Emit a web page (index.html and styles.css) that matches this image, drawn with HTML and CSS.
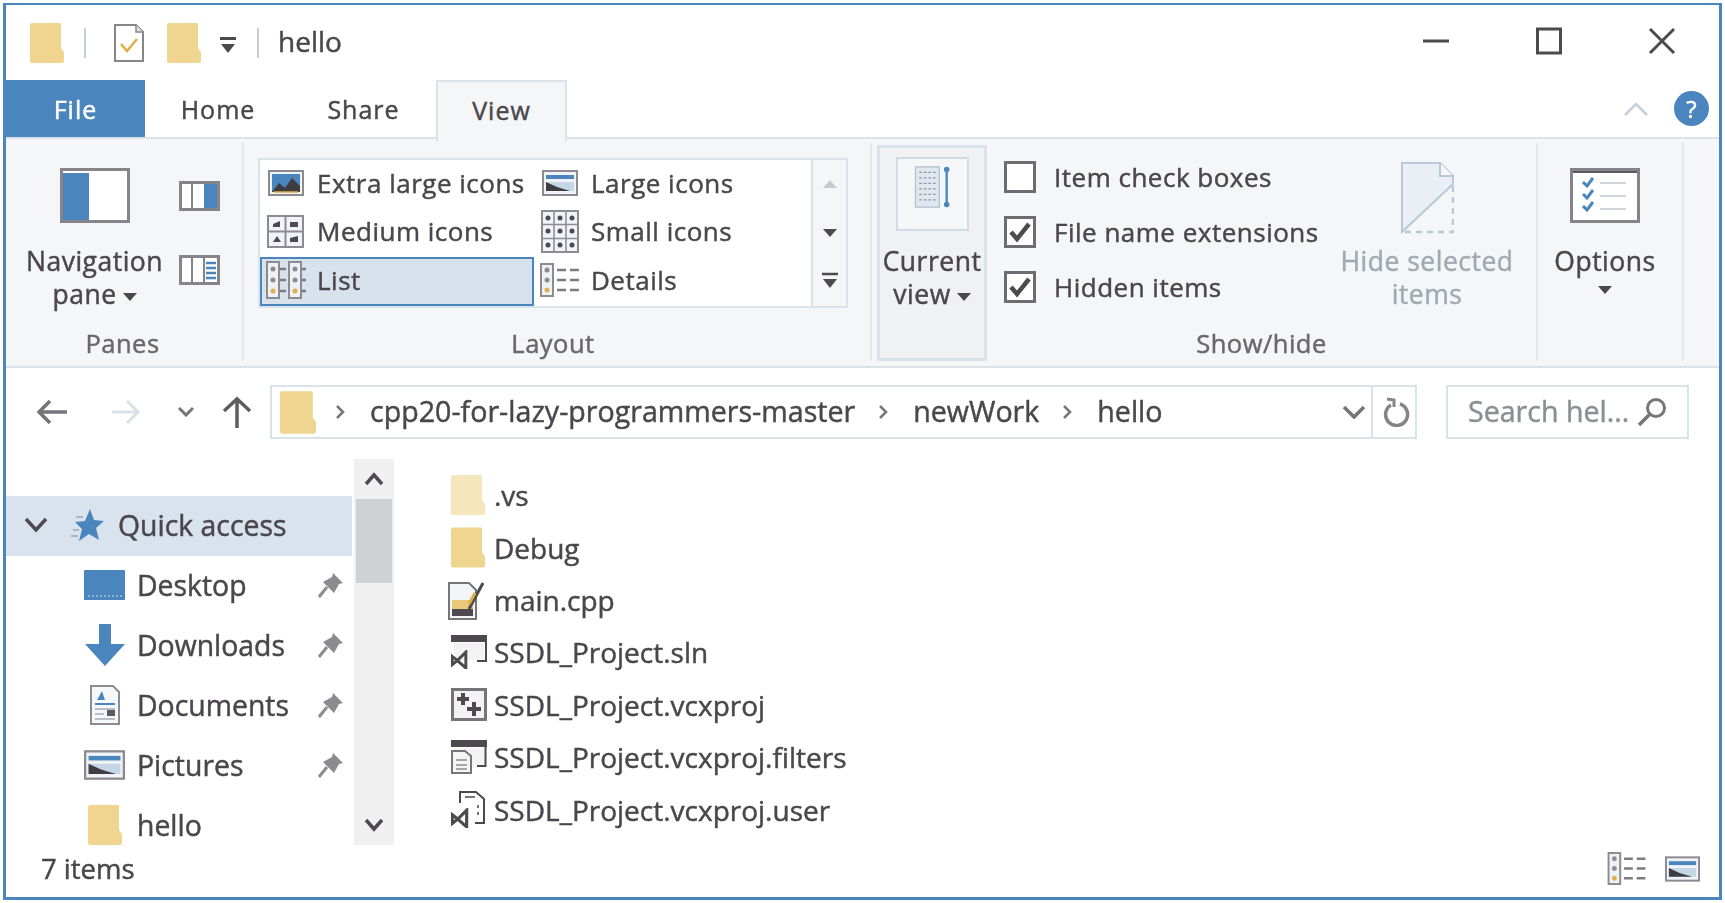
FILE: index.html
```html
<!DOCTYPE html>
<html>
<head>
    <title>hello</title>
    <link rel="stylesheet" href="styles.css">
</head>

<body>
    <!-- shared icons -->
    <svg class="sprite">
        <symbol id="folder" viewBox="0 0 34 40"><path d="M2 0H30Q31 0 31 2V25L34 29V38Q34 40 32 40H2Q0 40 0 38V2Q0 0 2 0Z" fill="#efd58f"/></symbol>
        <symbol id="pin" viewBox="0 0 26 26"><path d="M1 25L9 15" stroke="#8d8a90" stroke-width="3"/><path d="M15 1L25 11L21 12L16 21L5 10L14 5Z" fill="#8d8a90"/></symbol>
        <symbol id="picture" viewBox="0 0 36 26"><rect x="1" y="1" width="34" height="24" fill="#f0f4f8" stroke="#8c8a90" stroke-width="2"/><rect x="4" y="5" width="28" height="4" fill="#4a86bd"/><path d="M4 12H32V21H4Z" fill="#c5d6e6"/><path d="M4 12L15 17L28 21H4Z" fill="#3f3c42"/></symbol>
        <symbol id="picture-xl" viewBox="0 0 36 26"><rect x="1" y="1" width="34" height="24" fill="#f0f4f8" stroke="#8c8a90" stroke-width="2"/><rect x="4" y="4" width="28" height="18" fill="#4a86bd"/><path d="M4 22L11 13L17 18L24 8L32 16V22Z" fill="#3f3c42"/><path d="M6 22H30" stroke="#dcaf45" stroke-width="1.5"/></symbol>
        <symbol id="details" viewBox="0 0 40 34"><rect x="1" y="1" width="12" height="32" fill="#eef2f6" stroke="#8d8a90" stroke-width="2"/><circle cx="7" cy="7" r="2.5" fill="#8d8a90"/><circle cx="7" cy="17" r="2.5" fill="#8d8a90"/><circle cx="7" cy="27" r="2.5" fill="#d9b04d"/><path d="M17 7H26M30 7H39M17 17H26M30 17H39M17 27H26M30 27H39" stroke="#7d7a80" stroke-width="2.5"/></symbol>
        <symbol id="vs" viewBox="0 0 16 18"><path d="M1 6L6 10L1 14ZM6 10L14 2V17Z" fill="none" stroke="#4d494f" stroke-width="2.8"/></symbol>
    </svg>

    <div class="window">
        <div class="titlebar">
            <svg class="qa-folder" width="34" height="40"><use href="#folder"/></svg>
            <span class="qa-sep"></span>
            <svg class="qa-doc" width="30" height="38" viewBox="0 0 30 38"><path d="M1 1H22L29 8V37H1Z" fill="#fff" stroke="#86858b" stroke-width="2"/><path d="M22 1V8H29" fill="#e2e8ee" stroke="#86858b" stroke-width="1.5"/><path d="M7 20L13 27L23 15" fill="none" stroke="#dcaf45" stroke-width="2.5"/></svg>
            <svg class="qa-folder2" width="34" height="40"><use href="#folder"/></svg>
            <svg class="qa-caret" width="18" height="17" viewBox="0 0 18 17"><path d="M1 1.5H17" stroke="#4d494f" stroke-width="3"/><path d="M2 7H16L9 16Z" fill="#4d494f"/></svg>
            <span class="qa-sep qa-sep-last"></span>
            <span class="title-text">hello</span>
            <div class="win-buttons">
                <svg width="28" height="28" viewBox="0 0 28 28"><path d="M1 14H27" stroke="#4d494f" stroke-width="3"/></svg>
                <svg width="28" height="28" viewBox="0 0 28 28"><rect x="2.5" y="2" width="23" height="24" fill="none" stroke="#4d494f" stroke-width="3"/></svg>
                <svg width="28" height="28" viewBox="0 0 28 28"><path d="M2 2L26 26M26 2L2 26" stroke="#4d494f" stroke-width="3"/></svg>
            </div>
        </div>

        <div class="tabs">
            <div class="tab tab-file">File</div>
            <div class="tab tab-home">Home</div>
            <div class="tab tab-share">Share</div>
            <div class="tab tab-view">View</div>
            <div class="tabs-right">
                <svg width="24" height="14" viewBox="0 0 24 14"><path d="M1 13L12 2L23 13" fill="none" stroke="#c3d0dd" stroke-width="2.5"/></svg>
                <div class="help">?</div>
            </div>
        </div>

        <div class="ribbon">
            <div class="group group-panes">
                <div class="group-body panes-body">
                    <div class="big-btn">
                        <div class="big-icon">
                            <svg width="70" height="55" viewBox="0 0 70 55"><rect x="1.5" y="1.5" width="67" height="52" fill="#fff" stroke="#86838a" stroke-width="3"/><rect x="3" y="5" width="26" height="47" fill="#4a86bd"/></svg>
                        </div>
                        <div class="big-label">Navigation<br>pane<i class="caret"></i></div>
                    </div>
                    <div class="small-panes">
                        <svg width="41" height="30" viewBox="0 0 41 30"><rect x="1.5" y="1.5" width="38" height="27" fill="#fff" stroke="#86838a" stroke-width="3"/><path d="M13 3V27" stroke="#86838a" stroke-width="2"/><rect x="25" y="3" width="13" height="24" fill="#4a86bd"/></svg>
                        <svg width="41" height="30" viewBox="0 0 41 30"><rect x="1.5" y="1.5" width="38" height="27" fill="#fff" stroke="#86838a" stroke-width="3"/><path d="M13 3V27M25 3V27" stroke="#86838a" stroke-width="2"/><path d="M27 8H37M27 13H37M27 18H37M27 23H37" stroke="#4a86bd" stroke-width="2.5"/></svg>
                    </div>
                </div>
                <div class="group-label label-panes">Panes</div>
            </div>

            <div class="group group-layout">
                <div class="group-body">
                    <div class="gallery">
                        <div class="gallery-grid">
                            <div class="tile"><span class="tile-icon"><svg width="36" height="26"><use href="#picture-xl"/></svg></span>Extra large icons</div>
                            <div class="tile"><span class="tile-icon"><svg width="36" height="26"><use href="#picture"/></svg></span>Large icons</div>
                            <div class="tile">
                                <span class="tile-icon">
                                    <svg width="37" height="33" viewBox="0 0 37 33"><rect x="1" y="1" width="35" height="31" fill="#f0f4f8" stroke="#8d8a90" stroke-width="2"/><path d="M18.5 1V32M1 16.5H36" stroke="#8d8a90" stroke-width="2"/><path d="M6 9l7-3v6H6ZM23 7h8v5h-8ZM6 27l4-6 4 6ZM23 27v-4l8-2v6Z" fill="#4d494f"/></svg>
                                </span>Medium icons
                            </div>
                            <div class="tile">
                                <span class="tile-icon">
                                    <svg width="38" height="43" viewBox="0 0 38 43"><rect x="1" y="1" width="36" height="41" fill="#f0f4f8" stroke="#8d8a90" stroke-width="2"/><path d="M13 1V42M25 1V42M1 14.5H37M1 28.5H37" stroke="#8d8a90" stroke-width="1.5"/><g fill="#4d494f"><circle cx="7" cy="8" r="2.5"/><circle cx="19" cy="8" r="2.5"/><circle cx="31" cy="8" r="2.5"/><circle cx="7" cy="21" r="2.5"/><circle cx="19" cy="21" r="2.5"/><circle cx="31" cy="21" r="2.5"/><circle cx="7" cy="35" r="2.5"/><circle cx="19" cy="35" r="2.5"/><circle cx="31" cy="35" r="2.5"/></g></svg>
                                </span>Small icons
                            </div>
                            <div class="tile tile-active">
                                <span class="tile-icon">
                                    <svg width="40" height="38" viewBox="0 0 40 38"><g fill="#eef2f6" stroke="#8d8a90" stroke-width="2"><rect x="1" y="1" width="12" height="36"/><rect x="23" y="1" width="12" height="36"/></g><g fill="#8d8a90"><circle cx="7" cy="8" r="2.5"/><circle cx="7" cy="19" r="2.5"/><circle cx="29" cy="8" r="2.5"/><circle cx="29" cy="19" r="2.5"/></g><circle cx="7" cy="30" r="2.5" fill="#d9b04d"/><circle cx="29" cy="30" r="2.5" fill="#d9b04d"/><path d="M14 8H20M14 19H20M14 30H20M36 8H40M36 19H40M36 30H40" stroke="#7d7a80" stroke-width="2.5"/></svg>
                                </span>List
                            </div>
                            <div class="tile"><span class="tile-icon"><svg width="40" height="34"><use href="#details"/></svg></span>Details</div>
                        </div>
                        <div class="gallery-scroll">
                            <svg width="16" height="10" viewBox="0 0 16 10"><path d="M1 9L8 1L15 9Z" fill="#c2cbd4"/></svg>
                            <svg class="scroll-down" width="16" height="10" viewBox="0 0 16 10"><path d="M1 1L8 9L15 1Z" fill="#4d494f"/></svg>
                            <svg class="scroll-more" width="18" height="18" viewBox="0 0 18 18"><path d="M1 2H17" stroke="#4d494f" stroke-width="2.5"/><path d="M2 7H16L9 16Z" fill="#4d494f"/></svg>
                        </div>
                    </div>
                </div>
                <div class="group-label label-layout">Layout</div>
            </div>

            <div class="current-view">
                <div class="cv-box">
                    <svg width="40" height="44" viewBox="0 0 40 48"><rect x="2" y="2" width="26" height="44" fill="#dfe7ef" stroke="#b8c4d0" stroke-width="1.5"/><path d="M6 8H24M6 14H24M6 20H24M6 26H24M6 32H24M6 38H24" stroke="#8f9aa5" stroke-width="1.5" stroke-dasharray="3 2"/><path d="M36 4V44" stroke="#4a86bd" stroke-width="2.5"/><circle cx="36" cy="5" r="3" fill="#4a86bd"/><circle cx="36" cy="43" r="3" fill="#4a86bd"/></svg>
                </div>
                <div class="big-label cv-label">Current<br>view<i class="caret"></i></div>
            </div>

            <div class="group group-show">
                <div class="group-body show-body">
                    <div class="checks">
                        <label class="check-row"><span class="box"></span>Item check boxes</label>
                        <label class="check-row"><span class="box"><svg width="24" height="22" viewBox="0 0 24 22"><path d="M3 11L9 18L21 3" fill="none" stroke="#4d494f" stroke-width="4.5"/></svg></span>File name extensions</label>
                        <label class="check-row"><span class="box"><svg width="24" height="22" viewBox="0 0 24 22"><path d="M3 11L9 18L21 3" fill="none" stroke="#4d494f" stroke-width="4.5"/></svg></span>Hidden items</label>
                    </div>
                    <div class="big-btn hide-btn">
                        <div class="big-icon">
                            <svg width="54" height="72" viewBox="0 0 54 72"><path d="M2 1H40L53 14V22L2 70Z" fill="#e9eff5" stroke="#b9c8d8" stroke-width="2"/><path d="M40 1V14H53" fill="#f5f7f9" stroke="#b9c8d8" stroke-width="2"/><path d="M53 24V70H4" fill="none" stroke="#b9c8d8" stroke-width="2.5" stroke-dasharray="6 5"/></svg>
                        </div>
                        <div class="big-label muted">Hide selected<br>items</div>
                    </div>
                </div>
                <div class="group-label">Show/hide</div>
            </div>

            <div class="group group-options">
                <div class="big-btn">
                    <div class="big-icon">
                        <svg width="70" height="55" viewBox="0 0 70 55"><rect x="1.5" y="1.5" width="67" height="52" fill="#fff" stroke="#86838a" stroke-width="3"/><path d="M3 4H67" stroke="#5d595f" stroke-width="2"/><path d="M13 14L17 18L23 10M13 26L17 30L23 22M13 38L17 42L23 34" fill="none" stroke="#4a86bd" stroke-width="3"/><path d="M30 15H56M30 28H56M30 41H56" stroke="#cfd5db" stroke-width="2"/></svg>
                    </div>
                    <div class="big-label">Options<br><i class="caret caret-solo"></i></div>
                </div>
            </div>
        </div>

        <div class="addressbar">
            <svg class="nav-back" width="32" height="26" viewBox="0 0 32 26"><path d="M31 13H3M14 2L3 13L14 24" fill="none" stroke="#77747a" stroke-width="3.5"/></svg>
            <svg class="nav-forward" width="30" height="26" viewBox="0 0 30 26"><path d="M1 13H27M16 2L27 13L16 24" fill="none" stroke="#d9e1e8" stroke-width="3"/></svg>
            <svg class="nav-down" width="16" height="10" viewBox="0 0 16 10"><path d="M1 1L8 8L15 1" fill="none" stroke="#77747a" stroke-width="3"/></svg>
            <svg class="nav-up" width="30" height="32" viewBox="0 0 30 32"><path d="M15 32V3M2 15L15 3L28 15" fill="none" stroke="#5f5c62" stroke-width="3.5"/></svg>
            <div class="address">
                <svg class="addr-folder" width="36" height="43"><use href="#folder"/></svg>
                <svg class="crumb-sep crumb-first" width="9" height="14" viewBox="0 0 9 14"><path d="M1 1L7 7L1 13" fill="none" stroke="#77747a" stroke-width="2.5"/></svg>
                <span>cpp20-for-lazy-programmers-master</span>
                <svg class="crumb-sep" width="9" height="14" viewBox="0 0 9 14"><path d="M1 1L7 7L1 13" fill="none" stroke="#77747a" stroke-width="2.5"/></svg>
                <span>newWork</span>
                <svg class="crumb-sep" width="9" height="14" viewBox="0 0 9 14"><path d="M1 1L7 7L1 13" fill="none" stroke="#77747a" stroke-width="2.5"/></svg>
                <span>hello</span>
                <svg class="addr-drop" width="24" height="14" viewBox="0 0 24 14"><path d="M2 2L12 12L22 2" fill="none" stroke="#77747a" stroke-width="3.5"/></svg>
                <div class="addr-refresh">
                    <svg width="28" height="30" viewBox="0 0 28 30"><path d="M9 8A11 11 0 1 0 18 7" fill="none" stroke="#86838a" stroke-width="3.5"/><path d="M5 2L12 3V10" fill="none" stroke="#86838a" stroke-width="3"/></svg>
                </div>
            </div>
            <div class="search">
                <span>Search hel...</span>
                <svg width="30" height="30" viewBox="0 0 30 30"><circle cx="19" cy="11" r="8.5" fill="none" stroke="#77747a" stroke-width="3"/><path d="M13 17L2 28" stroke="#77747a" stroke-width="3.5"/></svg>
            </div>
        </div>

        <div class="main">
            <div class="sidebar">
                <div class="nav-row nav-active">
                    <svg class="nav-chevron" width="24" height="16" viewBox="0 0 24 16"><path d="M2 2L12 13L22 2" fill="none" stroke="#4d494f" stroke-width="3.5"/></svg>
                    <svg class="nav-star" width="34" height="34" viewBox="0 0 34 34"><path d="M20 1L24 12L34 13L26 20L29 32L19 26L9 33L12 21L5 14L15 13Z" fill="#4a86bd"/><path d="M1 28H8M3 22H9M6 9H13" stroke="#9aa7b5" stroke-width="1.5"/></svg>
                    <span>Quick access</span>
                </div>
                <div class="nav-row nav-child">
                    <span class="nav-icon"><svg width="41" height="30" viewBox="0 0 41 30"><rect width="41" height="30" rx="1" fill="#4a86bd"/><path d="M4 26H38" stroke="#9fc1de" stroke-width="1.5" stroke-dasharray="2 2"/></svg></span>
                    <span class="nav-text">Desktop</span>
                    <svg width="26" height="26"><use href="#pin"/></svg>
                </div>
                <div class="nav-row nav-child">
                    <span class="nav-icon"><svg width="40" height="42" viewBox="0 0 40 42"><path d="M14 0H26V20H40L20 42L0 20H14Z" fill="#4a86bd"/></svg></span>
                    <span class="nav-text">Downloads</span>
                    <svg width="26" height="26"><use href="#pin"/></svg>
                </div>
                <div class="nav-row nav-child">
                    <span class="nav-icon"><svg width="30" height="40" viewBox="0 0 30 40"><path d="M1 1H23L29 7V39H1Z" fill="#f5f8fb" stroke="#8d8a90" stroke-width="2"/><path d="M12 6L7 15H15Z" fill="#4a86bd"/><path d="M5 19H25" stroke="#4a86bd" stroke-width="2"/><path d="M5 24H25M5 34H25M5 29H14" stroke="#a7aab0" stroke-width="1.5"/><rect x="17" y="25" width="8" height="6" fill="#5d595f"/></svg></span>
                    <span class="nav-text">Documents</span>
                    <svg width="26" height="26"><use href="#pin"/></svg>
                </div>
                <div class="nav-row nav-child">
                    <span class="nav-icon"><svg width="41" height="30"><use href="#picture"/></svg></span>
                    <span class="nav-text">Pictures</span>
                    <svg width="26" height="26"><use href="#pin"/></svg>
                </div>
                <div class="nav-row nav-child">
                    <span class="nav-icon"><svg width="34" height="40"><use href="#folder"/></svg></span>
                    <span class="nav-text">hello</span>
                </div>
            </div>

            <div class="scrollbar">
                <div class="scroll-btn"><svg width="20" height="14" viewBox="0 0 20 14"><path d="M2 12L10 3L18 12" fill="none" stroke="#4d494f" stroke-width="3.5"/></svg></div>
                <div class="scroll-thumb"></div>
                <div class="scroll-track"></div>
                <div class="scroll-btn"><svg width="20" height="14" viewBox="0 0 20 14"><path d="M2 2L10 11L18 2" fill="none" stroke="#4d494f" stroke-width="3.5"/></svg></div>
            </div>

            <div class="files">
                <div class="file">
                    <span class="file-icon"><svg class="hidden-folder" width="34" height="40"><use href="#folder"/></svg></span>.vs
                </div>
                <div class="file">
                    <span class="file-icon"><svg width="34" height="41"><use href="#folder"/></svg></span>Debug
                </div>
                <div class="file">
                    <span class="file-icon"><svg class="cpp-icon" width="38" height="40" viewBox="0 0 38 40"><path d="M1 3H21L28 10V39H1Z" fill="#f3f6f9" stroke="#77747a" stroke-width="2"/><rect x="4" y="20" width="21" height="9" fill="#e9c97a"/><rect x="4" y="29" width="21" height="7" fill="#4d494f"/><path d="M21 29L35 3" stroke="#4d494f" stroke-width="3"/><path d="M21 24L27 13" stroke="#dcaf45" stroke-width="3"/></svg></span>main.cpp
                </div>
                <div class="file">
                    <span class="file-icon"><svg width="36" height="34" viewBox="0 0 36 34"><path d="M1 7V1H35V26H26" fill="none" stroke="#4d494f" stroke-width="2"/><rect y="0" width="36" height="7" fill="#4d494f"/><rect x="3" y="8" width="30" height="17" fill="#f3f3f3"/><svg x="0" y="15" width="17" height="19"><use href="#vs"/></svg></svg></span>SSDL_Project.sln
                </div>
                <div class="file">
                    <span class="file-icon"><svg width="36" height="33" viewBox="0 0 36 33"><rect x="1.5" y="1.5" width="33" height="30" fill="#f3f3f3" stroke="#77747a" stroke-width="3"/><path d="M12 5V17M6 11H18M23 14V28M16 21H30" stroke="#4d494f" stroke-width="4"/></svg></span>SSDL_Project.vcxproj
                </div>
                <div class="file">
                    <span class="file-icon"><svg width="36" height="34" viewBox="0 0 36 34"><path d="M34.5 6V26H26" fill="none" stroke="#4d494f" stroke-width="2"/><rect width="36" height="7" fill="#4d494f"/><rect x="3" y="8" width="30" height="17" fill="#f3f3f3"/><path d="M1 11H14L20 16V33H1Z" fill="#f5f5f5" stroke="#77747a" stroke-width="2"/><path d="M5 20H16M5 25H16M5 29H16" stroke="#8d8a90" stroke-width="1.5"/></svg></span>SSDL_Project.vcxproj.filters
                </div>
                <div class="file">
                    <span class="file-icon"><svg width="34" height="37" viewBox="0 0 34 37"><path d="M9 12V1H25L33 8V32H24" fill="none" stroke="#4d494f" stroke-width="2"/><path d="M14 6H24M27 14V17M27 21V24" stroke="#77747a" stroke-width="2"/><svg x="0" y="17" width="18" height="20"><use href="#vs"/></svg></svg></span>SSDL_Project.vcxproj.user
                </div>
            </div>
        </div>

        <div class="statusbar">
            <span class="status-count">7 items</span>
            <div class="status-views">
                <svg width="40" height="33"><use href="#details"/></svg>
                <svg width="35" height="28"><use href="#picture"/></svg>
            </div>
        </div>
    </div>
</body>
</html>
```

FILE: styles.css
```css
/* General Styles */
html, body {
    margin: 0;
    height: 100%;
}

body {
    padding: 3px;
    box-sizing: border-box;
    background-color: #fff;
    font-family: "Open Sans", "Noto Sans", sans-serif;
    font-size: 25px;
    color: #4a464c;
    -webkit-text-stroke: 0.45px currentColor;
    overflow: hidden;
}

svg {
    display: block;
    flex: none;
}

.sprite {
    width: 0;
    height: 0;
    position: absolute;
}

.window {
    height: 100%;
    box-sizing: border-box;
    border: 3px solid #4a86bd;
    border-top-width: 2px;
    display: flex;
    flex-direction: column;
    filter: blur(0.5px);
}

/* Title bar */
.titlebar {
    height: 75px;
    flex: none;
    display: flex;
    align-items: center;
}

.qa-folder {
    margin-left: 24px;
}

.qa-sep {
    width: 2px;
    height: 30px;
    margin-left: 20px;
    background-color: #c5ced7;
}

.qa-doc {
    margin-left: 28px;
}

.qa-folder2 {
    margin-left: 23px;
}

.qa-caret {
    margin-left: 18px;
    margin-top: 6px;
}

.qa-sep-last {
    margin-left: 20px;
}

.title-text {
    margin-left: 19px;
    margin-bottom: 4px;
    font-size: 28px;
}

.win-buttons {
    margin-left: auto;
    margin-right: 43px;
    margin-bottom: 4px;
    display: flex;
    gap: 85px;
}

/* Tabs */
.tabs {
    height: 59px;
    flex: none;
    display: flex;
    box-sizing: border-box;
    border-bottom: 2px solid #dbe3ea;
}

.tab {
    display: flex;
    align-items: center;
    justify-content: center;
    box-sizing: border-box;
    letter-spacing: 1px;
}

.tab-file {
    width: 139px;
    background-color: #4a86bd;
    color: #fff;
    height: 57px;
}

.tab-home {
    width: 146px;
}

.tab-share {
    width: 145px;
}

.tab-view {
    width: 131px;
    height: 61px;
    padding: 0 0 4px;
    background-color: #f5f6f7;
    border: 2px solid #dbe3ea;
    border-bottom: none;
    z-index: 1;
}

.tabs-right {
    margin-left: auto;
    margin-right: 10px;
    display: flex;
    align-items: center;
    gap: 26px;
}

.help {
    width: 35px;
    height: 35px;
    border-radius: 50%;
    background-color: #4a86bd;
    color: #fff;
    font-size: 24px;
    line-height: 35px;
    text-align: center;
}

/* Ribbon */
.ribbon {
    height: 229px;
    flex: none;
    display: flex;
    box-sizing: border-box;
    background-color: #f5f6f7;
    border-bottom: 2px solid #dbe3ea;
    font-size: 26px;
    letter-spacing: 0.5px;
}

.group {
    display: flex;
    flex-direction: column;
    box-sizing: border-box;
    margin: 4px 0 5px;
    border-right: 2px solid #e2e8ee;
}

.group-body {
    flex: 1;
    display: flex;
}

.group-label {
    height: 36px;
    line-height: 36px;
    text-align: center;
    color: #6a676c;
    font-size: 25.5px;
}

.label-panes {
    padding-right: 3px;
}

.label-layout {
    padding-right: 8px;
}

.group-panes {
    width: 238px;
}

.group-layout {
    width: 628px;
}

.group-show {
    width: 551px;
}

.group-options {
    width: 146px;
    padding-right: 10px;
    align-items: center;
}

.big-btn {
    display: flex;
    flex-direction: column;
    align-items: center;
    padding-top: 12px;
}

.big-icon {
    height: 80px;
    margin-bottom: 10px;
    display: flex;
    align-items: center;
}

.big-label {
    line-height: 33px;
    font-size: 26.5px;
    text-align: center;
    white-space: nowrap;
}

.muted {
    color: #a1a9b2;
}

.caret {
    display: inline-block;
    margin-left: 6px;
    border: 7px solid transparent;
    border-top: 8px solid #4a464c;
    border-bottom: none;
    vertical-align: middle;
}

.caret-solo {
    margin-left: 0;
    vertical-align: 10px;
}

.panes-body {
    padding-left: 20px;
}

.small-panes {
    margin-left: 16px;
    padding-top: 38px;
    display: flex;
    flex-direction: column;
    gap: 44px;
}

/* Layout gallery */
.gallery {
    width: 590px;
    height: 150px;
    margin: 15px 0 0 14px;
    box-sizing: border-box;
    border: 2px solid #dbe3ea;
    background-color: #fff;
    display: flex;
}

.gallery-grid {
    width: 551px;
    display: grid;
    grid-template-columns: 274px 277px;
    grid-auto-rows: 1fr;
}

.tile {
    padding-bottom: 3px;
    box-sizing: border-box;
    display: flex;
    align-items: center;
    white-space: nowrap;
}

.tile-icon {
    width: 57px;
    display: flex;
    justify-content: center;
    padding-right: 6px;
    box-sizing: border-box;
}

.tile-active {
    background-color: #d7e2ed;
    outline: 2px solid #4a86bd;
    outline-offset: -2px;
}

.gallery-scroll {
    flex: 1;
    padding-top: 19px;
    border-left: 2px solid #dbe3ea;
    background-color: #f5f6f7;
    display: flex;
    flex-direction: column;
    align-items: center;
}

.scroll-down {
    margin-top: 39px;
}

.scroll-more {
    margin-top: 34px;
}

/* Current view */
.current-view {
    width: 110px;
    height: 216px;
    margin: 6px 0 0 5px;
    box-sizing: border-box;
    border: 3px solid #d9e3ed;
    background-color: #f0f1f2;
    display: flex;
    flex-direction: column;
    align-items: center;
    padding-top: 9px;
    flex: none;
}

.cv-box {
    width: 73px;
    height: 74px;
    box-sizing: border-box;
    border: 2px solid #cfdbe7;
    background-color: #f5f6f7;
    display: flex;
    justify-content: center;
    padding-top: 6px;
    margin-bottom: 14px;
}

/* Show/hide */
.show-body {
    padding-left: 17px;
}

.checks {
    width: 333px;
    padding-top: 18px;
    display: flex;
    flex-direction: column;
    gap: 23px;
}

.check-row {
    height: 32px;
    display: flex;
    align-items: center;
    gap: 18px;
    white-space: nowrap;
}

.box {
    width: 32px;
    height: 32px;
    flex: none;
    box-sizing: border-box;
    border: 3px solid #6e6c72;
    background-color: #fff;
    display: flex;
    align-items: center;
    justify-content: center;
}

.hide-btn {
    width: 180px;
}

.hide-btn svg {
    margin-top: 6px;
}

/* Address bar */
.addressbar {
    height: 87px;
    padding-top: 1px;
    box-sizing: border-box;
    flex: none;
    display: flex;
    align-items: center;
    font-size: 28.6px;
}

.nav-back {
    margin-left: 30px;
}

.nav-forward {
    margin-left: 43px;
}

.nav-down {
    margin-left: 37px;
}

.nav-up {
    margin-left: 28px;
}

.address {
    width: 1147px;
    height: 54px;
    margin-left: 18px;
    box-sizing: border-box;
    border: 2px solid #dbe3ea;
    display: flex;
    align-items: center;
}

.address span {
    padding-bottom: 4px;
}

.addr-folder {
    margin-left: 8px;
}

.crumb-sep {
    margin: 0 25px 0 24px;
}

.crumb-first {
    margin-left: 20px;
}

.addr-drop {
    margin-left: auto;
    margin-right: 5px;
}

.addr-refresh {
    width: 44px;
    height: 100%;
    padding-left: 3px;
    box-sizing: border-box;
    border-left: 2px solid #dbe3ea;
    display: flex;
    align-items: center;
    justify-content: center;
}

.search {
    width: 243px;
    height: 54px;
    margin-left: 29px;
    padding: 0 20px 0 20px;
    box-sizing: border-box;
    border: 2px solid #dbe3ea;
    display: flex;
    align-items: center;
    justify-content: space-between;
    color: #8b8f94;
}

.search span {
    padding-bottom: 4px;
}

/* Main area */
.main {
    flex: 1;
    min-height: 0;
    display: flex;
    overflow: hidden;
    font-size: 28px;
}

.sidebar {
    width: 348px;
    padding-top: 41px;
    flex: none;
    box-sizing: border-box;
    font-size: 28.4px;
}

.nav-row {
    height: 60px;
    padding-bottom: 2px;
    box-sizing: border-box;
    display: flex;
    align-items: center;
    white-space: nowrap;
}

.nav-active {
    background-color: #d8e3ee;
    width: 346px;
}

.nav-chevron {
    margin-left: 18px;
}

.nav-star {
    margin-left: 22px;
}

.nav-active span {
    margin-left: 14px;
}

.nav-icon {
    width: 43px;
    margin-left: 77px;
    margin-right: 11px;
    display: flex;
    justify-content: center;
}

.nav-text {
    width: 181px;
}

.scrollbar {
    width: 40px;
    height: 386px;
    margin-top: 4px;
    flex: none;
    background-color: #f0f0f0;
    display: flex;
    flex-direction: column;
}

.scroll-btn {
    height: 40px;
    display: flex;
    align-items: center;
    justify-content: center;
}

.scroll-thumb {
    height: 84px;
    margin: 0 2px;
    background-color: #cfd2d5;
}

.scroll-track {
    flex: 1;
}

.files {
    padding: 14px 0 0 57px;
}

.file {
    height: 52.4px;
    display: flex;
    align-items: center;
    white-space: nowrap;
}

.file-icon {
    width: 43px;
    display: flex;
    justify-content: flex-start;
}

.cpp-icon {
    margin-left: -3px;
}

.hidden-folder {
    opacity: 0.6;
}

/* Status bar */
.statusbar {
    height: 51px;
    padding: 0 19px 6px 35px;
    box-sizing: border-box;
    flex: none;
    display: flex;
    align-items: center;
}

.status-count {
    font-size: 27.5px;
}

.status-views {
    margin-left: auto;
    display: flex;
    align-items: center;
    gap: 18px;
}
```
